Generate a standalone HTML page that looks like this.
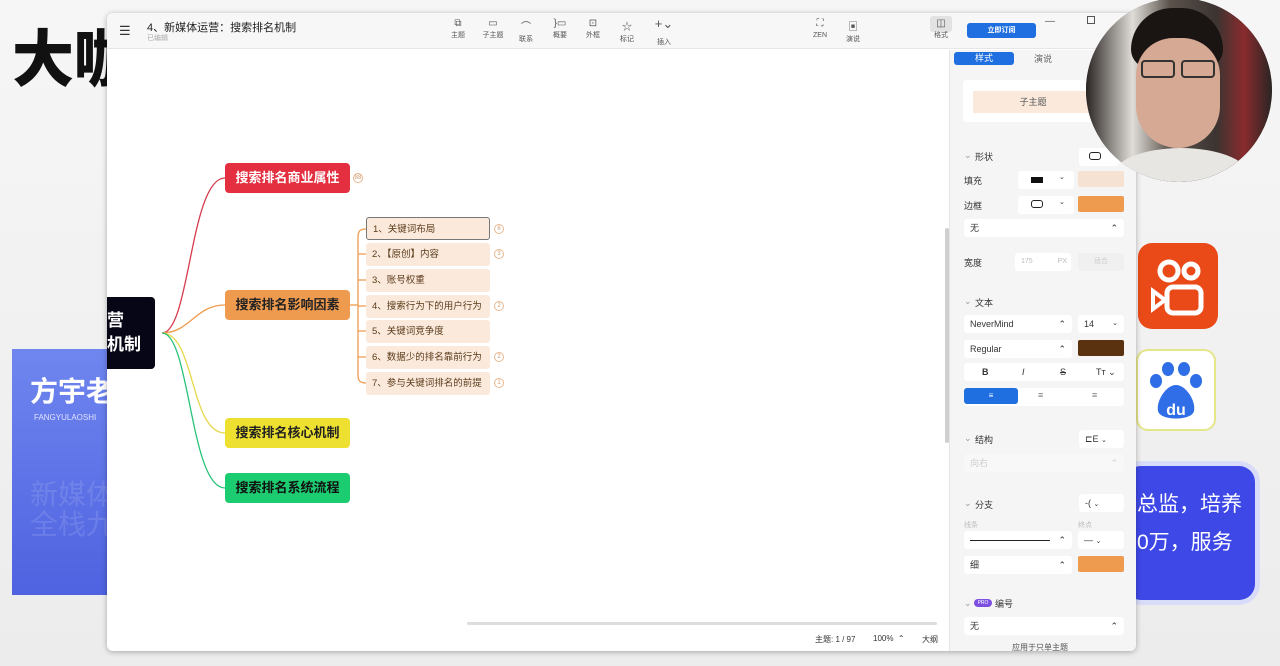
<!DOCTYPE html>
<html><head><meta charset="utf-8">
<style>
*{margin:0;padding:0;box-sizing:border-box}
body{width:1280px;height:666px;overflow:hidden;position:relative;background:#f1f1f1;font-family:"Liberation Sans","Noto Sans CJK SC",sans-serif;color:#333}
.a{position:absolute}
.t{font-size:8px;color:#555;text-align:center}
.node{position:absolute;border-radius:4px;font-weight:bold;font-size:13px;text-align:center;line-height:30px;width:125px;height:30px}
.sub{position:absolute;left:366px;width:124px;height:23px;background:#fbeadc;border-radius:3px;font-size:9.5px;color:#5a3a1a;line-height:23px;padding-left:6px}
.cnt{position:absolute;width:10px;height:10px;border:1px solid #e8b890;border-radius:50%;font-size:6px;color:#d09a70;text-align:center;line-height:8px}
.lbl{position:absolute;font-size:9px;color:#333}
.box{position:absolute;background:#fff;border-radius:3px;font-size:9px;line-height:18px;padding-left:6px;height:18px}
.sw{position:absolute;border-radius:2px;height:16px}
</style></head><body>
<div class="a" style="left:0;top:0;width:1280px;height:666px;background:linear-gradient(180deg,#f6f6f6,#ececec)"></div>
<div class="a" style="left:12px;top:26px;font-size:62px;line-height:70px;font-weight:900;color:#111;white-space:nowrap">大咖</div>
<div class="a" style="left:12px;top:349px;width:100px;height:246px;background:linear-gradient(180deg,#6f86ef,#4f62e0)"></div>
<div class="a" style="left:30px;top:370px;font-size:28px;font-weight:bold;color:#fff">方宇老</div>
<div class="a" style="left:34px;top:413px;font-size:8px;color:#dfe4ff">FANGYULAOSHI</div>
<div class="a" style="left:30px;top:480px;font-size:28px;color:rgba(255,255,255,.12);line-height:30px">新媒体<br>全栈九</div>
<div class="a" style="left:1138px;top:243px;width:80px;height:86px;background:#ea4a17;border-radius:14px"></div>
<svg class="a" style="left:1138px;top:243px" width="80" height="86"><circle cx="31" cy="28" r="9" fill="none" stroke="#fff" stroke-width="5"/><circle cx="53" cy="28" r="7" fill="none" stroke="#fff" stroke-width="5"/><rect x="29" y="44" width="34" height="26" rx="6" fill="none" stroke="#fff" stroke-width="5"/><path d="M15 48 L27 57 L15 66Z" fill="none" stroke="#fff" stroke-width="4"/></svg>
<div class="a" style="left:1136px;top:349px;width:80px;height:82px;background:#fff;border:2px solid #e4e68a;border-radius:12px"></div>
<svg class="a" style="left:1136px;top:349px" width="80" height="82"><g fill="#2f6ee6"><ellipse cx="20" cy="32" rx="6" ry="7"/><ellipse cx="32" cy="20" rx="6" ry="7"/><ellipse cx="48" cy="20" rx="6" ry="7"/><ellipse cx="60" cy="32" rx="6" ry="7"/><path d="M40 36 C30 36 20 52 22 62 C24 72 56 72 58 62 C60 52 50 36 40 36Z"/></g><text x="40" y="66" font-size="16" font-weight="bold" fill="#fff" text-anchor="middle" font-family="Liberation Sans">du</text></svg>
<div class="a" style="left:1125px;top:466px;width:130px;height:134px;background:#3e48e6;border-radius:16px;box-shadow:0 0 0 5px #d9dcf8"></div>
<div class="a" style="left:1137px;top:486px;font-size:21px;color:#fff;line-height:38px">总监，培养<br>0万，服务</div>

<div class="a" style="left:107px;top:13px;width:1029px;height:638px;background:#fff;border-radius:6px;box-shadow:0 1px 6px rgba(0,0,0,.3);overflow:hidden">
 <div class="a" style="left:0;top:0;width:1029px;height:36px;background:#f7f7f7;border-bottom:1px solid #e6e6e6"></div>
 <div class="a" style="left:12px;top:10px;font-size:13px;color:#333">☰</div>
 <div class="a" style="left:40px;top:6px;font-size:11px;color:#222">4、新媒体运营：搜索排名机制</div>
 <div class="a" style="left:40px;top:20px;font-size:7px;color:#aaa">已编辑</div>
 <div class="a t" style="left:340px;top:5px;width:22px;font-size:10px">⧉<br><span style="font-size:7px">主题</span></div>
 <div class="a t" style="left:373px;top:5px;width:26px;font-size:10px">▭<br><span style="font-size:7px">子主题</span></div>
 <div class="a t" style="left:408px;top:5px;width:22px;font-size:10px">⌒<br><span style="font-size:7px">联系</span></div>
 <div class="a t" style="left:442px;top:5px;width:22px;font-size:10px">}▭<br><span style="font-size:7px">概要</span></div>
 <div class="a t" style="left:475px;top:5px;width:22px;font-size:10px">⊡<br><span style="font-size:7px">外框</span></div>
 <div class="a t" style="left:509px;top:5px;width:22px;font-size:10px">☆<br><span style="font-size:7px">标记</span></div>
 <div class="a t" style="left:543px;top:3px;width:28px;font-size:13px">+⌄<br><span style="font-size:7px">插入</span></div>
 <div class="a t" style="left:702px;top:5px;width:22px;font-size:10px">⛶<br><span style="font-size:7px">ZEN</span></div>
 <div class="a t" style="left:735px;top:5px;width:22px;font-size:10px">▣<br><span style="font-size:7px">演说</span></div>
 <div class="a" style="left:823px;top:3px;width:22px;height:16px;background:#e2e2e2;border-radius:3px"></div>
 <div class="a t" style="left:823px;top:5px;width:22px;font-size:10px">◫<br><span style="font-size:7px">格式</span></div>
 <div class="a" style="left:860px;top:10px;width:69px;height:15px;background:#1f6fe0;border-radius:3px;color:#fff;font-size:7px;text-align:center;line-height:15px;font-weight:bold">立即订阅</div>
 <div class="a" style="left:938px;top:3px;font-size:10px;color:#555">—</div>
 <div class="a" style="left:980px;top:3px;width:8px;height:8px;border:1px solid #555"></div>

 <div class="a" style="left:842px;top:37px;width:187px;height:601px;background:#f5f5f5;border-left:1px solid #e4e4e4"></div>
 <div class="a" style="left:838px;top:215px;width:4px;height:215px;background:#cfcfcf;border-radius:2px"></div>
 <div class="a" style="left:847px;top:39px;width:60px;height:13px;background:#1f6fe0;border-radius:3px;color:#fff;font-size:9px;text-align:center;line-height:13px">样式</div>
 <div class="a" style="left:927px;top:39px;font-size:9px;color:#666">演说</div>
 <div class="a" style="left:856px;top:67px;width:130px;height:42px;background:#fff;border-radius:3px"></div>
 <div class="a" style="left:866px;top:78px;width:120px;height:22px;background:#fbeadc;font-size:9px;color:#555;text-align:center;line-height:22px">子主题</div>
 <div class="lbl" style="left:857px;top:137px;color:#999">⌄</div><div class="lbl" style="left:868px;top:137px">形状</div>
 <div class="box" style="left:972px;top:135px;width:40px"></div><div class="a" style="left:982px;top:139px;width:12px;height:8px;border:1.5px solid #222;border-radius:3px"></div>
 <div class="lbl" style="left:857px;top:161px">填充</div>
 <div class="box" style="left:911px;top:158px;width:56px"></div><div class="a" style="left:924px;top:164px;width:12px;height:6px;background:#111"></div><div class="lbl" style="left:952px;top:160px;font-size:7px">⌄</div>
 <div class="sw" style="left:971px;top:158px;width:46px;background:#f6e2d2"></div>
 <div class="lbl" style="left:857px;top:186px">边框</div>
 <div class="box" style="left:911px;top:183px;width:56px"></div><div class="a" style="left:924px;top:187px;width:12px;height:8px;border:1.5px solid #222;border-radius:3px"></div><div class="lbl" style="left:952px;top:185px;font-size:7px">⌄</div>
 <div class="sw" style="left:971px;top:183px;width:46px;background:#ef9b4f"></div>
 <div class="box" style="left:857px;top:206px;width:160px">无<span style="position:absolute;right:6px">⌃</span></div>
 <div class="lbl" style="left:857px;top:243px">宽度</div>
 <div class="box" style="left:908px;top:240px;width:56px;color:#bbb;font-size:7px">175<span style="position:absolute;right:4px">PX</span></div>
 <div class="box" style="left:971px;top:240px;width:46px;background:#f0f0f0;color:#ccc;font-size:7px;text-align:center;padding:0">适合</div>
 <div class="lbl" style="left:857px;top:283px;color:#999">⌄</div><div class="lbl" style="left:868px;top:283px">文本</div>
 <div class="box" style="left:857px;top:302px;width:108px">NeverMind<span style="position:absolute;right:6px">⌃</span></div>
 <div class="box" style="left:971px;top:302px;width:46px">14<span style="position:absolute;right:6px;font-size:7px">⌄</span></div>
 <div class="box" style="left:857px;top:327px;width:108px">Regular<span style="position:absolute;right:6px">⌃</span></div>
 <div class="sw" style="left:971px;top:327px;width:46px;background:#5a320f"></div>
 <div class="box" style="left:857px;top:350px;width:160px;padding:0;font-size:9px"><b style="position:absolute;left:18px">B</b><i style="position:absolute;left:58px">I</i><s style="position:absolute;left:96px">S</s><span style="position:absolute;left:132px">Tт ⌄</span></div>
 <div class="box" style="left:857px;top:375px;width:160px;padding:0"></div>
 <div class="a" style="left:857px;top:375px;width:54px;height:16px;background:#1f6fe0;border-radius:3px;color:#fff;font-size:8px;text-align:center;line-height:16px">≡</div>
 <div class="lbl" style="left:931px;top:377px;color:#777">≡</div><div class="lbl" style="left:985px;top:377px;color:#777">≡</div>
 <div class="lbl" style="left:857px;top:420px;color:#999">⌄</div><div class="lbl" style="left:868px;top:420px">结构</div>
 <div class="box" style="left:972px;top:417px;width:45px">⊏E <span style="font-size:7px">⌄</span></div>
 <div class="box" style="left:857px;top:441px;width:160px;color:#ccc;background:#f8f8f8">向右<span style="position:absolute;right:6px">⌃</span></div>
 <div class="lbl" style="left:857px;top:485px;color:#999">⌄</div><div class="lbl" style="left:868px;top:485px">分支</div>
 <div class="box" style="left:972px;top:481px;width:45px">-( <span style="font-size:7px">⌄</span></div>
 <div class="lbl" style="left:857px;top:507px;font-size:7px;color:#bbb">线条</div><div class="lbl" style="left:971px;top:507px;font-size:7px;color:#bbb">终点</div>
 <div class="box" style="left:857px;top:518px;width:108px"><span style="position:absolute;left:6px;top:9px;width:80px;height:1px;background:#222"></span><span style="position:absolute;right:6px">⌃</span></div>
 <div class="box" style="left:971px;top:518px;width:46px">— <span style="font-size:7px">⌄</span></div>
 <div class="box" style="left:857px;top:543px;width:108px">细<span style="position:absolute;right:6px">⌃</span></div>
 <div class="sw" style="left:971px;top:543px;width:46px;background:#ef9b4f"></div>
 <div class="lbl" style="left:857px;top:585px;color:#999">⌄</div>
 <div class="a" style="left:867px;top:586px;width:18px;height:8px;background:#7d4fe0;border-radius:4px;color:#fff;font-size:5px;text-align:center;line-height:8px">PRO</div>
 <div class="lbl" style="left:888px;top:584px">编号</div>
 <div class="box" style="left:857px;top:604px;width:160px">无<span style="position:absolute;right:6px">⌃</span></div>
 <div class="lbl" style="left:905px;top:629px;font-size:8px;color:#555">应用于只单主题</div>

 <div class="a" style="left:360px;top:609px;width:470px;height:3px;background:#ddd;border-radius:2px"></div>
 <div class="lbl" style="left:708px;top:621px;font-size:8px">主题: 1 / 97</div>
 <div class="lbl" style="left:766px;top:621px;font-size:8px">100%&nbsp; ⌃</div>
 <div class="lbl" style="left:815px;top:621px;font-size:8px">大纲</div>
</div>

<svg class="a" style="left:0;top:0" width="900" height="666">
 <g fill="none" stroke-width="1.3">
  <path d="M162 333 C190 333 190 178 225 178" stroke="#d63b4d"/>
  <path d="M162 333 C190 333 195 305 225 305" stroke="#ef9b4f"/>
  <path d="M162 333 C195 333 190 433 225 433" stroke="#e6d74a"/>
  <path d="M162 333 C190 333 190 488 225 488" stroke="#28c27a"/>
  <g stroke="#ef9b4f">
   <path d="M350 305 L358 305"/>
   <path d="M366 229 C359 229 358 232 358 238 L358 374 C358 380 359 383 366 383"/>
   <path d="M358 254 L366 254 M358 280 L366 280 M358 306 L366 306 M358 331 L366 331 M358 357 L366 357"/>
  </g>
 </g>
</svg>
<div class="a" style="left:107px;top:297px;width:48px;height:72px;background:#060616;border-radius:0 4px 4px 0;color:#fff;font-weight:bold;font-size:17px;line-height:24px;padding-top:12px">营<br>机制</div>
<div class="node" style="left:225px;top:163px;background:#e32f3f;color:#fff">搜索排名商业属性</div>
<div class="cnt" style="left:353px;top:173px">88</div>
<div class="node" style="left:225px;top:290px;background:#ef9b4f;color:#222">搜索排名影响因素</div>
<div class="node" style="left:225px;top:418px;background:#ede030;color:#222">搜索排名核心机制</div>
<div class="node" style="left:225px;top:473px;background:#1ccc70;color:#111">搜索排名系统流程</div>
<div class="sub" style="top:217px;border:1px solid #777">1、关键词布局</div><div class="cnt" style="left:494px;top:224px">6</div>
<div class="sub" style="top:243px">2、【原创】内容</div><div class="cnt" style="left:494px;top:249px">3</div>
<div class="sub" style="top:269px">3、账号权重</div>
<div class="sub" style="top:295px">4、搜索行为下的用户行为</div><div class="cnt" style="left:494px;top:301px">2</div>
<div class="sub" style="top:320px">5、关键词竞争度</div>
<div class="sub" style="top:346px">6、数据少的排名靠前行为</div><div class="cnt" style="left:494px;top:352px">2</div>
<div class="sub" style="top:372px">7、参与关键词排名的前提</div><div class="cnt" style="left:494px;top:378px">1</div>

<div class="a" style="left:1086px;top:-2px;width:186px;height:184px;border-radius:50%;overflow:hidden;background:#3a3330">
 <div class="a" style="left:0;top:0;width:186px;height:184px;background:linear-gradient(90deg,#2a2523 0%,#e0ddd8 25%,#5b524c 45%,#3b3431 70%,#8a2b2e 85%,#2a2523 100%)"></div>
 <div class="a" style="left:45px;top:10px;width:92px;height:60px;background:#1a1412;border-radius:45px 45px 20px 20px"></div>
 <div class="a" style="left:50px;top:40px;width:84px;height:110px;background:#d6a994;border-radius:40px 40px 45px 45px"></div>
 <div class="a" style="left:55px;top:62px;width:34px;height:18px;border:2px solid #333;border-radius:4px"></div>
 <div class="a" style="left:95px;top:62px;width:34px;height:18px;border:2px solid #333;border-radius:4px"></div>
 <div class="a" style="left:25px;top:150px;width:140px;height:60px;background:#e8e6e2;border-radius:50%"></div>
</div>
</body></html>
